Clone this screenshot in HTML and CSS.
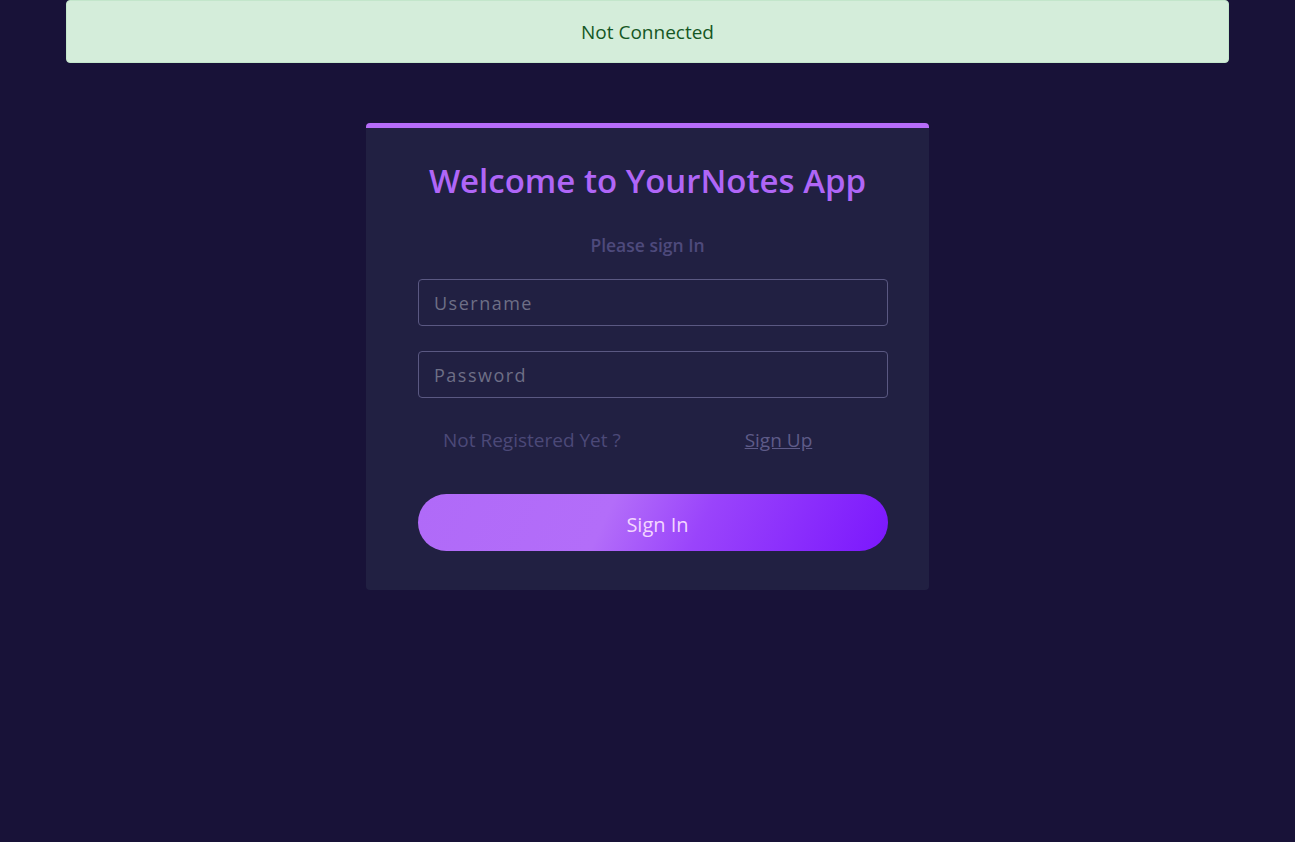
FILE: index.html
```html
<!DOCTYPE html>
<html>
<head>
<meta charset="utf-8">
<link rel="stylesheet" href="styles.css">
</head>
<body>
<div class="page">
  <div class="alert">Not Connected</div>
  <div class="card">
    <h1 class="title">Welcome to YourNotes App</h1>
    <p class="subtitle">Please sign In</p>
    <form class="form">
      <input class="field" type="text" placeholder="Username">
      <input class="field" type="password" placeholder="Password">
      <div class="register">
        <span class="register-text">Not Registered Yet ?</span>
        <a class="register-link" href="#">Sign Up</a>
      </div>
      <button class="btn" type="button">Sign In</button>
    </form>
  </div>
</div>
</body>
</html>
```
FILE: styles.css
```css
* { box-sizing: border-box; }
html, body { margin: 0; padding: 0; }
body {
  background: #181238;
  font-family: "Open Sans", "Noto Sans", sans-serif;
  height: 842px;
}
.page {
  display: flex;
  flex-direction: column;
  align-items: center;
}
.alert {
  width: 1163px;
  height: 63px;
  background: #d4edda;
  border: 1px solid #c3e6cb;
  border-radius: 4px;
  color: #155724;
  font-size: 19px;
  display: flex;
  align-items: center;
  justify-content: center;
  padding-top: 1px;
}
.card {
  margin-top: 60px;
  width: 563px;
  background: #212042;
  border-top: 5px solid #b66cf9;
  border-radius: 4px;
  padding: 33px 40px 39px 40px;
}
.title {
  margin: 0;
  text-align: center;
  color: #b066f7;
  font-size: 33px;
  font-weight: 600;
  line-height: 40px;
}
.subtitle {
  margin: 32px 0 0 0;
  text-align: center;
  color: #4e4a7c;
  font-size: 17.5px;
  font-weight: 600;
  line-height: 24px;
}
.form {
  margin: 22px 0 0 12px;
  width: 470px;
  display: flex;
  flex-direction: column;
}
.field {
  height: 47px;
  width: 470px;
  background: transparent;
  border: 1px solid #5a5882;
  border-radius: 4px;
  padding: 1px 15px 0 15px;
  font-family: inherit;
  font-size: 18px;
  letter-spacing: 1.5px;
  color: #c8c8d8;
  outline: none;
}
.field + .field { margin-top: 25px; }
.field::placeholder { color: #6e6f86; }
.register {
  margin-top: 28px;
  display: flex;
  align-items: center;
  height: 28px;
  font-size: 19px;
}
.register-text {
  margin-left: 25px;
  color: #4c4978;
}
.register-link {
  margin-left: 124px;
  color: #5e5b88;
  text-decoration: underline;
}
.btn {
  margin-top: 40px;
  height: 57px;
  width: 470px;
  border: none;
  border-radius: 29px;
  background: linear-gradient(115deg, #b06af8 0%, #b36df9 40%, #9a44fb 60%, #7b17fd 100%);
  color: #f3d6ff;
  font-family: inherit;
  font-size: 20px;
  padding-left: 15px;
  padding-top: 5px;
}
```
